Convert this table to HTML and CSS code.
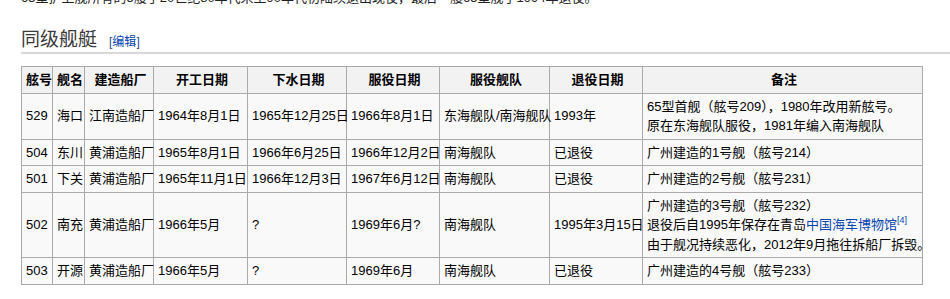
FILE: index.html
```html
<!DOCTYPE html>
<html lang="zh">
<head>
<meta charset="utf-8">
<title>同级舰艇</title>
<link rel="stylesheet" href="styles.css">
</head>
<body>
<div class="content">
  <p class="lead">65型护卫舰所有的5艘于20世纪80年代末至90年代初陆续退出现役，最后一艘65型舰于1994年退役。</p>
  <h2 class="section-title"><span class="headline">同级舰艇</span><span class="editsection"><span class="bracket">[</span><a href="#">编辑</a><span class="bracket">]</span></span></h2>
  <table class="wikitable">
    <colgroup>
      <col class="c-no"><col class="c-name"><col class="c-yard"><col class="c-date1"><col class="c-date2"><col class="c-date3"><col class="c-fleet"><col class="c-retire"><col class="c-note">
    </colgroup>
    <thead>
      <tr><th>舷号</th><th>舰名</th><th>建造船厂</th><th>开工日期</th><th>下水日期</th><th>服役日期</th><th>服役舰队</th><th>退役日期</th><th>备注</th></tr>
    </thead>
    <tbody>
      <tr><td>529</td><td>海口</td><td>江南造船厂</td><td>1964年8月1日</td><td>1965年12月25日</td><td>1966年8月1日</td><td>东海舰队/南海舰队</td><td>1993年</td><td>65型首舰（舷号209），1980年改用新舷号。<br>原在东海舰队服役，1981年编入南海舰队</td></tr>
      <tr><td>504</td><td>东川</td><td>黄浦造船厂</td><td>1965年8月1日</td><td>1966年6月25日</td><td>1966年12月2日</td><td>南海舰队</td><td>已退役</td><td>广州建造的1号舰（舷号214）</td></tr>
      <tr><td>501</td><td>下关</td><td>黄浦造船厂</td><td>1965年11月1日</td><td>1966年12月3日</td><td>1967年6月12日</td><td>南海舰队</td><td>已退役</td><td>广州建造的2号舰（舷号231）</td></tr>
      <tr><td>502</td><td>南充</td><td>黄浦造船厂</td><td>1966年5月</td><td>?</td><td>1969年6月?</td><td>南海舰队</td><td>1995年3月15日</td><td>广州建造的3号舰（舷号232）<br>退役后自1995年保存在青岛<a href="#">中国海军博物馆</a><sup class="ref"><a href="#">[4]</a></sup><br>由于舰况持续恶化，2012年9月拖往拆船厂拆毁。</td></tr>
      <tr><td>503</td><td>开源</td><td>黄浦造船厂</td><td>1966年5月</td><td>?</td><td>1969年6月</td><td>南海舰队</td><td>已退役</td><td>广州建造的4号舰（舷号233）</td></tr>
    </tbody>
  </table>
</div>
</body>
</html>
```

FILE: styles.css
```css
html, body {
  margin: 0;
  padding: 0;
  background: #ffffff;
  overflow: hidden;
}

body {
  font-family: "Liberation Sans", Arial, "Noto Sans CJK SC", sans-serif;
  font-size: 13px;
  color: #222222;
}

.content {
  padding-left: 21px;
}

.lead {
  margin: -12px 0 0 0;
  line-height: 20px;
  color: #222222;
}

.section-title {
  margin: 19px 0 0 0;
  font-weight: normal;
  font-size: 19px;
  line-height: 25px;
  height: 25px;
  color: #3a3a3a;
  border-bottom: 2px solid #d9d9d9;
  display: flex;
  align-items: baseline;
}

.headline {
  line-height: 25px;
}

.editsection {
  font-size: 12px;
  line-height: 1;
  margin-left: 12px;
}

.editsection .bracket {
  color: #2a4b8d;
}

a {
  color: #0645ad;
  text-decoration: none;
}

.wikitable {
  margin-top: 12px;
  border-collapse: collapse;
  table-layout: fixed;
  width: 902px;
  background: #f9f9f9;
  border: 1px solid #aaaaaa;
  color: #000000;
  line-height: 19.5px;
}

.wikitable th,
.wikitable td {
  border: 1px solid #aaaaaa;
  padding: 3px 1px 3px 4px;
  white-space: nowrap;
}

.wikitable th {
  background: #f2f2f2;
  font-weight: bold;
  text-align: center;
}

.wikitable td {
  text-align: left;
  vertical-align: middle;
}

.c-no { width: 31px; }
.c-name { width: 32px; }
.c-yard { width: 69px; }
.c-date1 { width: 94px; }
.c-date2 { width: 99px; }
.c-date3 { width: 93px; }
.c-fleet { width: 110px; }
.c-retire { width: 93px; }
.c-note { width: 280px; }

.ref {
  font-size: 9px;
  line-height: 1;
  vertical-align: 6px;
}
```
